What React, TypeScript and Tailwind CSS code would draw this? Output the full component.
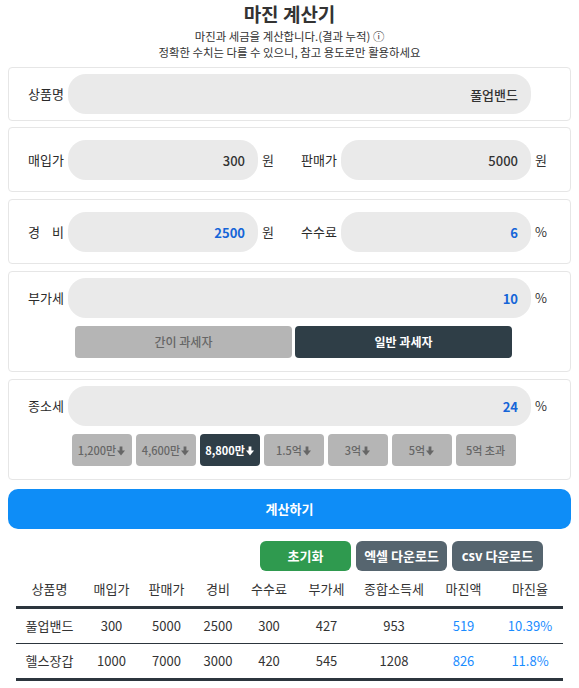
import React from "react";

const FONT = "font-['Noto_Sans_CJK_KR','Noto_Sans',sans-serif]";

function Arrow() {
  return (
    <svg width="8" height="10" viewBox="0 0 8 10" className="inline-block ml-[1px] -mt-[2px]" fill="currentColor">
      <rect x="2.6" y="0.5" width="2.8" height="4.5" />
      <polygon points="0,4.5 8,4.5 4,9.5" />
    </svg>
  );
}

function Field({
  label,
  value,
  unit,
  blue,
  spread,
}: {
  label: string;
  value: string;
  unit?: string;
  blue?: boolean;
  spread?: boolean;
}) {
  return (
    <div className="flex items-center flex-1 min-w-0">
      {spread ? (
        <div className="w-[36px] shrink-0 flex justify-between text-[13px] text-[#2a2a2a]">
          <span>경</span>
          <span>비</span>
        </div>
      ) : (
        <div className="w-[36px] shrink-0 text-[13px] text-[#2a2a2a] whitespace-nowrap">{label}</div>
      )}
      <input
        readOnly
        value={value}
        className={`ml-[4px] flex-1 min-w-0 h-[40px] rounded-[18px] bg-[#eaeaea] text-right pr-[13px] text-[13px] outline-none border-0 ${
          blue ? "text-[#1565d8] font-semibold" : "text-[#333] font-medium"
        }`}
      />
      <div className="w-[20px] shrink-0 text-center text-[13px] text-[#333]">{unit ?? ""}</div>
    </div>
  );
}

const tableCols = ["w-[67px]", "w-[57px]", "w-[53px]", "w-[50px]", "w-[52px]", "w-[63px]", "w-[72px]", "w-[67px]", "w-[66px]"];
const headers = ["상품명", "매입가", "판매가", "경비", "수수료", "부가세", "종합소득세", "마진액", "마진율"];
const rows = [
  ["풀업밴드", "300", "5000", "2500", "300", "427", "953", "519", "10.39%"],
  ["헬스장갑", "1000", "7000", "3000", "420", "545", "1208", "826", "11.8%"],
];

const brackets = ["1,200만", "4,600만", "8,800만", "1.5억", "3억", "5억", "5억 초과"];

export default function App() {
  return (
    <div className={`w-[579px] min-h-[688px] bg-white ${FONT} text-[#333]`}>
      <div className="px-[8px]">
        <div className="text-center">
          <h1 className="text-[19px] font-bold leading-[28px] text-[#333]">마진 계산기</h1>
          <p className="text-[11.4px] leading-[16px] text-[#333]">마진과 세금을 계산합니다.(결과 누적) ⓘ</p>
          <p className="text-[11.4px] leading-[16px] text-[#333]">정확한 수치는 다를 수 있으니, 참고 용도로만 활용하세요</p>
        </div>

        <div className="mt-[7px] border border-[#e6e6e6] rounded-[4px] px-[19px] py-[6px]">
          <Field label="상품명" value="풀업밴드" />
        </div>

        <div className="mt-[6px] border border-[#e6e6e6] rounded-[4px] px-[19px] pt-[12px] pb-[11px] flex gap-[23px]">
          <Field label="매입가" value="300" unit="원" />
          <Field label="판매가" value="5000" unit="원" />
        </div>

        <div className="mt-[7px] border border-[#e6e6e6] rounded-[4px] px-[19px] pt-[12px] pb-[11px] flex gap-[23px]">
          <Field label="경 비" value="2500" unit="원" blue spread />
          <Field label="수수료" value="6" unit="%" blue />
        </div>

        <div className="mt-[7px] border border-[#e6e6e6] rounded-[4px] px-[19px] pt-[6px] pb-[13px]">
          <Field label="부가세" value="10" unit="%" blue />
          <div className="mt-[8px] pl-[8px] flex justify-center gap-[3px]">
            <button className="w-[217px] h-[32px] rounded-[4px] bg-[#b5b5b5] text-[#666] text-[12px] font-medium">
              간이 과세자
            </button>
            <button className="w-[217px] h-[32px] rounded-[4px] bg-[#2f3e47] text-white text-[12px] font-bold">
              일반 과세자
            </button>
          </div>
        </div>

        <div className="mt-[7px] border border-[#e6e6e6] rounded-[4px] px-[19px] pt-[6px] pb-[13px]">
          <Field label="종소세" value="24" unit="%" blue />
          <div className="mt-[8px] pl-[8px] flex justify-center gap-[4px]">
            {brackets.map((b, i) => (
              <button
                key={b}
                className={`w-[60px] h-[32px] rounded-[4px] text-[11px] whitespace-nowrap ${
                  i === 2 ? "bg-[#2f3e47] text-white font-bold" : "bg-[#b5b5b5] text-[#666] font-medium"
                }`}
              >
                {b}
                {i < 6 && <Arrow />}
              </button>
            ))}
          </div>
        </div>

        <button className="mt-[9px] w-full h-[40px] rounded-[10px] bg-[#0e8df7] text-white text-[13px] font-bold">
          계산하기
        </button>

        <div className="mt-[12px] flex justify-end gap-[5px] pr-[28px]">
          <button className="w-[91px] h-[30px] rounded-[6px] bg-[#2f9a4f] text-white text-[13px] font-bold">초기화</button>
          <button className="w-[91px] h-[30px] rounded-[6px] bg-[#56656f] text-white text-[13px] font-bold">엑셀 다운로드</button>
          <button className="w-[91px] h-[30px] rounded-[6px] bg-[#56656f] text-white text-[13px] font-bold">csv 다운로드</button>
        </div>

        <div className="px-[8px]">
          <table className="w-[547px] table-fixed border-separate border-spacing-0 text-[13px] text-[#333]">
            <thead>
              <tr>
                {headers.map((h, i) => (
                  <th
                    key={h}
                    className={`${tableCols[i]} h-[38px] font-normal text-center border-b-[3px] border-[#2c353d] p-0`}
                  >
                    {h}
                  </th>
                ))}
              </tr>
            </thead>
            <tbody>
              {rows.map((r, ri) => (
                <tr key={ri}>
                  {r.map((c, ci) => (
                    <td
                      key={ci}
                      className={`text-center p-0 ${
                        ri === 0 ? "h-[35px] border-b border-[#2c353d]" : "h-[37px] border-b-[3px] border-[#2c353d]"
                      } ${ci >= 7 ? "text-[#1a8cff]" : ""}`}
                    >
                      {c}
                    </td>
                  ))}
                </tr>
              ))}
            </tbody>
          </table>
        </div>
      </div>
    </div>
  );
}
